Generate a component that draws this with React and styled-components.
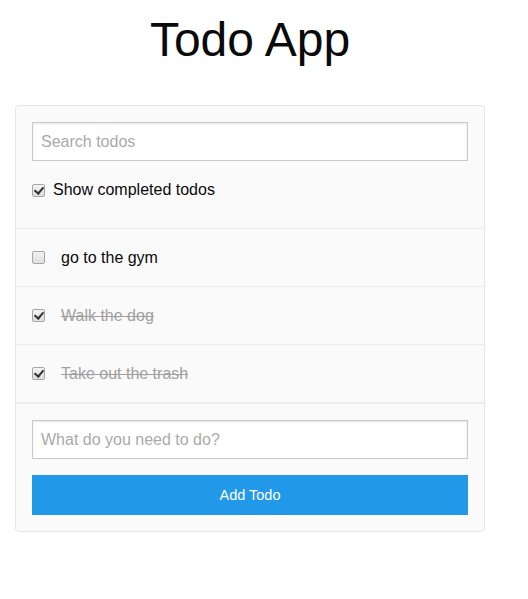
import React, { useState } from "react";
import styled, { createGlobalStyle } from "styled-components";

const Global = createGlobalStyle`
  html, body { margin: 0; padding: 0; background: #fff; }
  body { font-family: "Liberation Sans", Arial, sans-serif; color: #0a0a0a; }
  * { box-sizing: border-box; }
`;

const Page = styled.div`
  width: 500px;
  padding: 0 15px;
`;

const Title = styled.h1`
  margin: 0;
  padding-top: 10px;
  height: 105px;
  text-align: center;
  font-weight: 400;
  font-size: 48px;
  line-height: 60px;
`;

const Card = styled.div`
  background: #fafafa;
  border: 1px solid #e6e6e6;
  border-radius: 4px;
`;

const Section = styled.div`
  padding: 16px 16px ${(p) => p.$bottom || 16}px;
  border-top: ${(p) => (p.$topBorder ? "2px solid #ececec" : "none")};
`;

const TextInput = styled.input`
  display: block;
  width: 100%;
  height: 39px;
  margin: 0 0 ${(p) => p.$mb || 0}px;
  padding: 8px;
  border: 1px solid #cacaca;
  background: #fff;
  font-family: inherit;
  font-size: 16px;
  color: #0a0a0a;
  box-shadow: inset 0 1px 2px rgba(10, 10, 10, 0.1);
  outline: none;
  &::placeholder { color: #aaa; }
`;

const Box = styled.input.attrs({ type: "checkbox" })`
  appearance: none;
  -webkit-appearance: none;
  position: relative;
  flex: none;
  width: 13px;
  height: 13px;
  margin: 0 ${(p) => p.$gap}px 0 0;
  border: 1px solid #a6a6a6;
  border-radius: 2px;
  background: linear-gradient(#f2f2f2, #dedede);
  cursor: pointer;
  &:checked::after {
    content: "";
    position: absolute;
    left: 3px;
    top: 0px;
    width: 4px;
    height: 7px;
    border: solid #333;
    border-width: 0 2px 2px 0;
    transform: rotate(40deg);
  }
`;

const CheckLabel = styled.label`
  display: flex;
  align-items: center;
  height: 26px;
  font-size: 16px;
  cursor: pointer;
`;

const TodoRow = styled.div`
  display: flex;
  align-items: center;
  height: 58px;
  padding: 0 16px;
  border-top: 1px solid #ececec;
  cursor: pointer;
`;

const TodoText = styled.span`
  font-size: 16px;
  color: ${(p) => (p.$done ? "#a0a0a0" : "#0a0a0a")};
  text-decoration: ${(p) => (p.$done ? "line-through" : "none")};
`;

const AddButton = styled.button`
  display: block;
  width: 100%;
  height: 40px;
  margin-top: 16px;
  border: none;
  background: #2199e8;
  color: #fefefe;
  font-family: inherit;
  font-size: 14.5px;
  cursor: pointer;
`;

export default function App() {
  const [showDone, setShowDone] = useState(true);
  const [todos, setTodos] = useState([
    { id: 1, text: "go to the gym", done: false },
    { id: 2, text: "Walk the dog", done: true },
    { id: 3, text: "Take out the trash", done: true },
  ]);

  const toggle = (id) =>
    setTodos(todos.map((t) => (t.id === id ? { ...t, done: !t.done } : t)));

  return (
    <Page>
      <Global />
      <Title>Todo App</Title>
      <Card>
        <Section $bottom={25}>
          <TextInput $mb={16} placeholder="Search todos" />
          <CheckLabel>
            <Box $gap={8} checked={showDone} onChange={() => setShowDone(!showDone)} />
            Show completed todos
          </CheckLabel>
        </Section>
        {todos
          .filter((t) => showDone || !t.done)
          .map((t) => (
            <TodoRow key={t.id} onClick={() => toggle(t.id)}>
              <Box $gap={16} checked={t.done} readOnly />
              <TodoText $done={t.done}>{t.text}</TodoText>
            </TodoRow>
          ))}
        <Section $topBorder>
          <TextInput placeholder="What do you need to do?" />
          <AddButton>Add Todo</AddButton>
        </Section>
      </Card>
    </Page>
  );
}
